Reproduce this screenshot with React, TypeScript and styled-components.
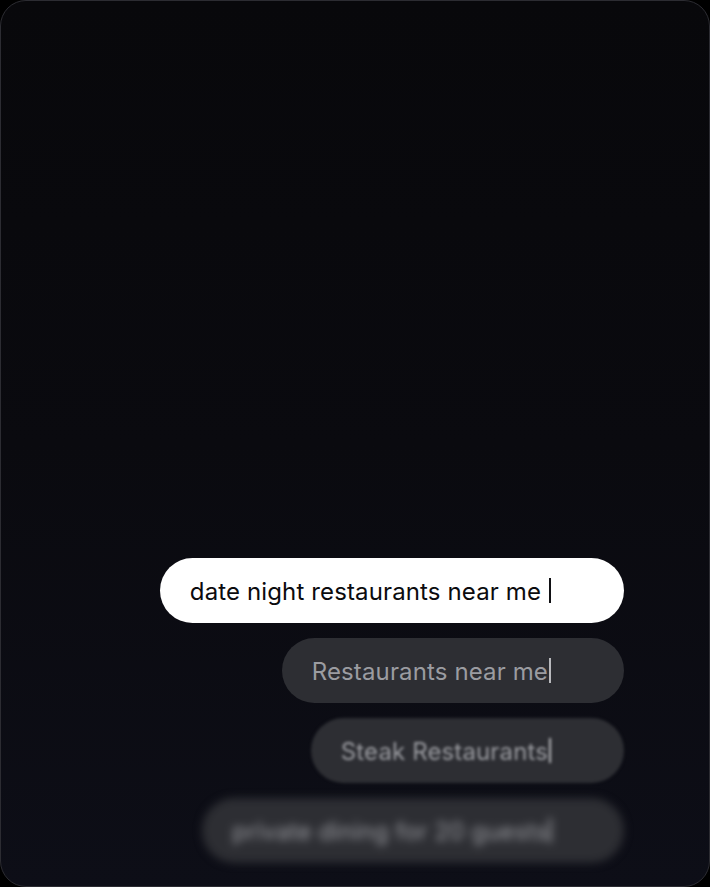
import React from "react";
import styled, { createGlobalStyle } from "styled-components";

const GlobalStyle = createGlobalStyle`
  html, body {
    margin: 0;
    padding: 0;
    background: #000;
  }
  * {
    box-sizing: border-box;
  }
`;

type Suggestion = {
  text: string;
  blur: number;
};

const suggestions: Suggestion[] = [
  { text: "Restaurants near me", blur: 0 },
  { text: "Steak Restaurants", blur: 1.5 },
  { text: "private dining for 20 guests", blur: 4.5 },
];

const App = () => {
  return (
    <>
      <GlobalStyle />
      <Frame>
        <Stack>
          <Pill $active>
            <PillText>date night restaurants near me </PillText>
            <Caret $active />
          </Pill>
          {suggestions.map((s, i) => (
            <Pill key={i} $blur={s.blur}>
              <PillText>{s.text}</PillText>
              <Caret />
            </Pill>
          ))}
        </Stack>
      </Frame>
    </>
  );
};

export default App;

const Frame = styled.div`
  width: 710px;
  height: 887px;
  border: 1px solid #2c2c32;
  border-radius: 26px;
  background: linear-gradient(180deg, #08080b 0%, #0a0a0f 50%, #0d0e17 100%);
  display: flex;
  flex-direction: column;
  justify-content: flex-end;
  overflow: hidden;
  padding: 0 85px 23px 0;
`;

const Stack = styled.div`
  display: flex;
  flex-direction: column;
  align-items: flex-end;
  gap: 15px;
`;

const Pill = styled.div<{ $active?: boolean; $blur?: number }>`
  height: 65px;
  border-radius: 33px;
  display: flex;
  align-items: center;
  padding: 2px 73px 0 30px;
  background: ${(p) => (p.$active ? "#ffffff" : "#2d2e33")};
  color: ${(p) => (p.$active ? "#0b0b0e" : "#9b9ca1")};
  font-family: Inter, "Noto Sans", sans-serif;
  font-size: 24px;
  letter-spacing: 0.13px;
  filter: ${(p) => (p.$blur ? `blur(${p.$blur}px)` : "none")};
`;

const PillText = styled.span`
  white-space: pre;
  line-height: 1;
`;

const Caret = styled.span<{ $active?: boolean }>`
  display: inline-block;
  width: 2px;
  height: 25px;
  margin: -2px 0 0 1px;
  background: ${(p) => (p.$active ? "#111114" : "#b8b9bd")};
`;
